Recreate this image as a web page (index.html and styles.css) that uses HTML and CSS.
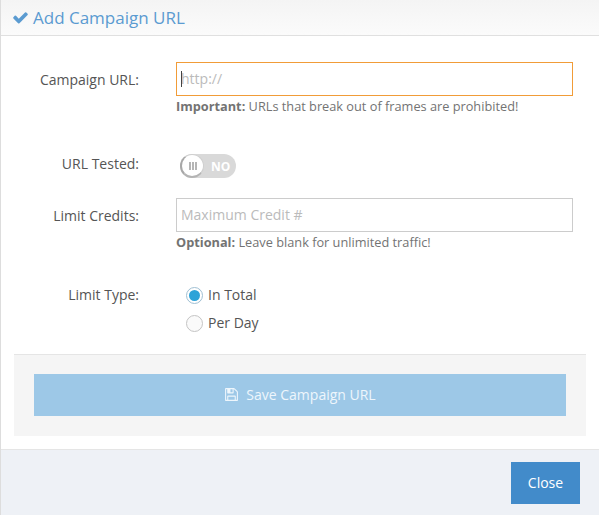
FILE: index.html
```html
<!DOCTYPE html>
<html lang="en">
<head>
  <meta charset="UTF-8">
  <title>Add Campaign URL</title>
  <link rel="stylesheet" href="styles.css">
</head>
<body>
  <div class="modal">
    <div class="modal-header">
      <svg class="icon-check" viewBox="0 0 1792 1792"><path d="M1671 566q0 40-28 68l-724 724-136 136q-28 28-68 28t-68-28l-136-136-362-362q-28-28-28-68t28-68l136-136q28-28 68-28t68 28l294 295 656-657q28-28 68-28t68 28l136 136q28 28 28 68z"/></svg>
      <h4>Add Campaign URL</h4>
    </div>

    <form class="modal-body">
      <div class="row row-url">
        <label>Campaign URL:</label>
        <div class="field">
          <div class="input-wrap">
            <input type="text" class="focused" placeholder="http://">
            <span class="caret"></span>
          </div>
          <p class="help"><strong>Important:</strong> URLs that break out of frames are prohibited!</p>
        </div>
      </div>

      <div class="row row-tested">
        <label>URL Tested:</label>
        <div class="toggle">
          <span class="knob"><i></i><i></i><i></i></span>
          <span class="toggle-text">NO</span>
        </div>
      </div>

      <div class="row row-limit">
        <label>Limit Credits:</label>
        <div class="field">
          <input type="text" placeholder="Maximum Credit #">
          <p class="help"><strong>Optional:</strong> Leave blank for unlimited traffic!</p>
        </div>
      </div>

      <div class="row row-type">
        <label>Limit Type:</label>
        <div class="radios">
          <div class="radio"><span class="dot checked"></span>In Total</div>
          <div class="radio"><span class="dot"></span>Per Day</div>
        </div>
      </div>

      <div class="form-actions">
        <button type="button" class="btn-save">
          <svg class="icon-save" viewBox="0 0 1792 1792"><path d="M512 1536h768v-384h-768v384zm896 0h128v-896q0-14-10-38.500t-20-34.500l-281-281q-10-10-34-20t-39-10v416q0 40-28 68t-68 28h-576q-40 0-68-28t-28-68v-416h-128v1280h128v-416q0-40 28-68t68-28h832q40 0 68 28t28 68v416zm-384-928v-320q0-13-9.500-22.500t-22.500-9.500h-192q-13 0-22.500 9.500t-9.500 22.500v320q0 13 9.500 22.500t22.500 9.500h192q13 0 22.500-9.500t9.500-22.500zm640 32v928q0 40-28 68t-68 28h-1344q-40 0-68-28t-28-68v-1344q0-40 28-68t68-28h928q40 0 88 20t76 48l280 280q28 28 48 76t20 88z"/></svg>
          Save Campaign URL
        </button>
      </div>
    </form>

    <div class="modal-footer">
      <button type="button" class="btn-close">Close</button>
    </div>
  </div>
</body>
</html>
```

FILE: styles.css
```css
* {
  box-sizing: border-box;
  font-family: 'Open Sans', 'Noto Sans', sans-serif;
}

html, body {
  margin: 0;
  padding: 0;
  height: 515px;
  overflow: hidden;
  background: #ffffff;
}

.modal {
  width: 599px;
  height: 515px;
  border-left: 1px solid #dddddd;
  display: flex;
  flex-direction: column;
  color: #555555;
  font-size: 14px;
}

.modal-header {
  height: 36px;
  padding: 0 0 0 11px;
  display: flex;
  align-items: center;
  gap: 4px;
  border-bottom: 1px solid #e0e0e0;
  background: linear-gradient(to bottom, #f4f4f4, #fbfbfb);
  color: #5b9bd1;
}

.modal-header h4 {
  margin: 0;
  font-size: 17px;
  font-weight: 400;
}

.icon-check {
  width: 17px;
  height: 17px;
  fill: #5b9bd1;
}

.modal-body {
  flex: 1;
  padding: 26px 13px 0 13px;
}

.row {
  display: flex;
}

.row label {
  width: 125px;
  margin-right: 37px;
  text-align: right;
  line-height: 36px;
}

.field {
  width: 397px;
}

.input-wrap {
  position: relative;
}

input {
  display: block;
  width: 100%;
  height: 34px;
  padding: 0 4px 2px;
  border: 1px solid #cccccc;
  outline: none;
  font-size: 14px;
  color: #555555;
}

input::placeholder {
  color: #bbbbbb;
  opacity: 1;
}

input.focused {
  border-color: #f19c38;
}

.caret {
  position: absolute;
  left: 5px;
  top: 9px;
  width: 1px;
  height: 16px;
  background: #444444;
}

.help {
  margin: 1px 0 0;
  font-size: 12.75px;
  line-height: 18px;
  color: #737373;
}

.row-url {
  height: 92px;
}

.row-tested {
  height: 44px;
  align-items: flex-start;
}

.row-tested label {
  line-height: 20px;
}

.toggle {
  width: 56px;
  height: 24px;
  margin-left: 4px;
  border-radius: 12px;
  background: #d9d9d9;
  display: flex;
  align-items: center;
}

.knob {
  width: 24px;
  height: 24px;
  border-radius: 50%;
  border: 1px solid #cfcfcf;
  border-left: 2px solid #a8a8a8;
  border-bottom: 2px solid #b4b4b4;
  background: #ffffff;
  display: flex;
  align-items: center;
  justify-content: center;
  gap: 1px;
}

.knob i {
  width: 2px;
  height: 8px;
  background: #b5b5b5;
}

.toggle-text {
  margin-left: 7px;
  font-size: 12px;
  font-weight: 700;
  color: #ffffff;
}

.row-limit {
  height: 84px;
}

.row-type {
  height: 72px;
}

.row-type label {
  line-height: 26px;
}

.radios {
  margin-left: 10px;
}

.radio {
  height: 28px;
  display: flex;
  align-items: center;
  gap: 5px;
  line-height: 26px;
  margin-top: -1px;
  margin-bottom: 1px;
}

.dot {
  width: 17px;
  height: 17px;
  border-radius: 50%;
  border: 1px solid #c4c4c4;
  background: #fafafa;
  display: inline-flex;
  align-items: center;
  justify-content: center;
}

.dot.checked {
  border-color: #9fbfd3;
  background: #ffffff;
}

.dot.checked::after {
  content: "";
  width: 11px;
  height: 11px;
  border-radius: 50%;
  background: #2ea3d8;
}

.form-actions {
  height: 82px;
  padding: 19px 20px;
  border-top: 1px solid #e5e5e5;
  background: #f5f5f5;
}

.btn-save {
  width: 100%;
  height: 42px;
  padding: 0 0 2px;
  border: none;
  background: #9dc8e7;
  color: #eef6fc;
  font-size: 14px;
  display: flex;
  align-items: center;
  justify-content: center;
  gap: 7px;
}

.icon-save {
  width: 15px;
  height: 15px;
  fill: #eef6fc;
}

.modal-footer {
  height: 66px;
  margin-top: 13px;
  padding: 12px 19px 0 0;
  display: flex;
  justify-content: flex-end;
  align-items: flex-start;
  border-top: 1px solid #e5e5e5;
  background: #eef1f6;
}

.btn-close {
  width: 69px;
  height: 42px;
  padding: 0 0 2px;
  border: none;
  background: #428bca;
  color: #ffffff;
  font-size: 14px;
}
```
